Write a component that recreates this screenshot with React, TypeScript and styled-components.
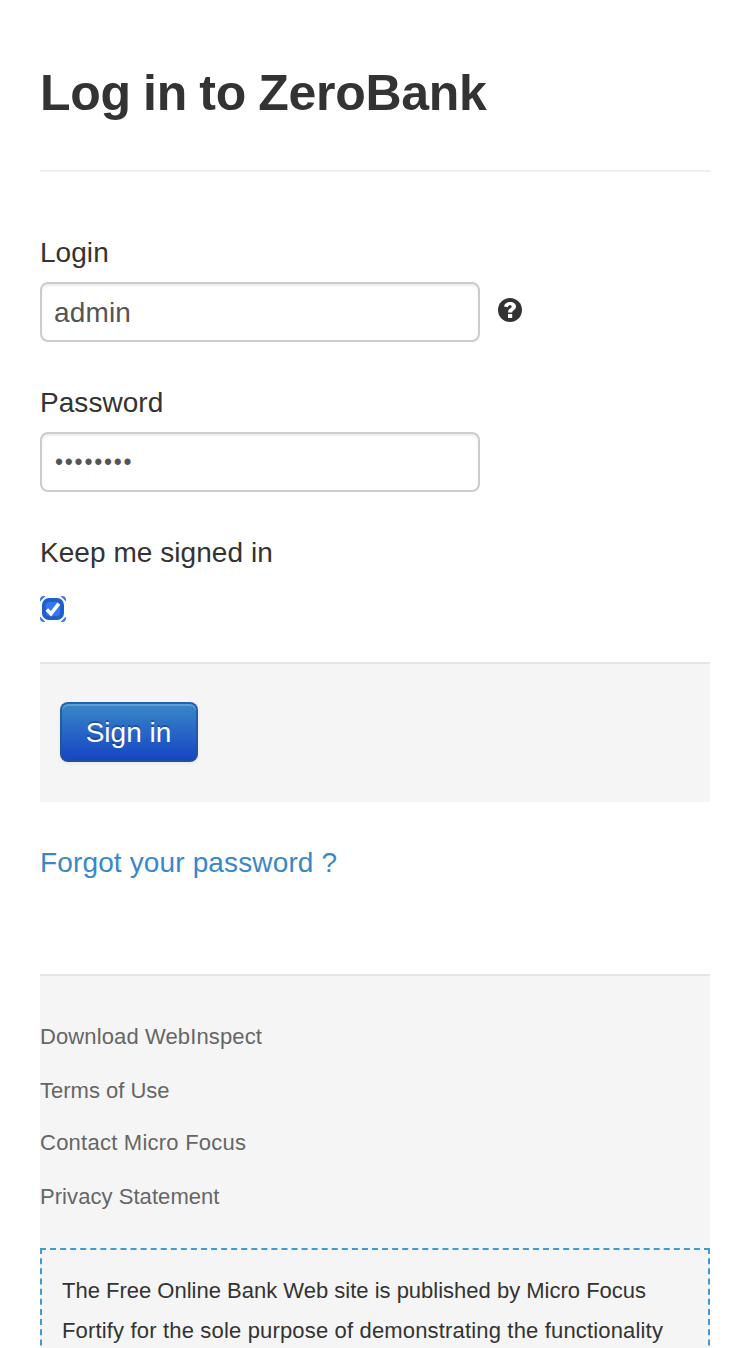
import React from 'react';
import styled, { createGlobalStyle } from 'styled-components';

const GlobalStyle = createGlobalStyle`
  *, *::before, *::after { box-sizing: border-box; }
  html, body { margin: 0; padding: 0; background: #fff; }
  body {
    font-family: "Helvetica Neue", "Liberation Sans", Arial, sans-serif;
    font-size: 28px;
    line-height: 40px;
    color: #333;
  }
`;

const Page = styled.main`
  height: 1348px;
  padding: 53px 40px 0;
  overflow: hidden;
`;

const Title = styled.h3`
  margin: 0;
  padding-bottom: 37px;
  border-bottom: 2px solid #eee;
  font-size: 50px;
  line-height: 80px;
  font-weight: 700;
  letter-spacing: -0.3px;
  word-spacing: -1.2px;
  white-space: nowrap;
`;

const Form = styled.form`
  display: flex;
  flex-direction: column;
  gap: 40px;
  margin: 60px 0 0;
`;

const Field = styled.div`
  display: flex;
  flex-direction: column;
  gap: 10px;
`;

const Label = styled.label`
  display: block;
  align-self: flex-start;
  height: 40px;
  line-height: 42px;
  letter-spacing: 0.05px;
`;

const Controls = styled.div`
  display: flex;
  align-items: center;
  gap: 18px;
`;

const Input = styled.input`
  width: 440px;
  height: 60px;
  margin: 0;
  padding: 10px 12px 8px;
  border: 2px solid #ccc;
  border-radius: 8px;
  background: #fff;
  box-shadow: inset 0 2px 2px rgba(0, 0, 0, 0.075);
  color: #555;
  font: inherit;
  letter-spacing: 0.15px;
  outline: none;
`;

const PasswordInput = styled(Input)`
  padding: 8px 13px 8px;
  font-size: 23px;
  letter-spacing: 1.75px;
`;

const HelpIcon = styled.svg`
  display: block;
  width: 24px;
  height: 24px;
  margin-bottom: 4px;
`;

const CheckIcon = styled.svg`
  display: block;
  width: 26px;
  height: 26px;
  margin-top: 14px;
`;

const Actions = styled.div`
  height: 140px;
  padding: 38px 20px;
  border-top: 2px solid #e5e5e5;
  background: #f5f5f5;
`;

const SubmitButton = styled.button`
  display: block;
  width: 138px;
  height: 60px;
  padding: 2px 1px 0 0;
  border: 2px solid transparent;
  border-radius: 8px;
  background: linear-gradient(#3a87c8, #1545c4) padding-box, linear-gradient(#2462b2, #1f4f98) border-box;
  box-shadow: inset 0 2px 0 rgba(255, 255, 255, 0.2), 0 2px 4px rgba(0, 0, 0, 0.05);
  color: #fff;
  font: inherit;
  text-shadow: 0 -2px 0 rgba(0, 0, 0, 0.25);
`;

const ForgotLink = styled.a`
  display: block;
  width: max-content;
  height: 40px;
  line-height: 42px;
  letter-spacing: 0.14px;
  color: #3a87c8;
  text-decoration: none;
`;

const Footer = styled.footer`
  margin-top: 92px;
  padding-top: 34px;
  border-top: 2px solid #e5e5e5;
  background: #f5f5f5;
  font-size: 22px;
`;

const FooterLinks = styled.ul`
  margin: 0 0 24px;
  padding: 0;
  list-style: none;
`;

const FooterLink = styled.li<{ $spacing?: number; $tight?: boolean }>`
  height: ${({ $tight }) => ($tight ? 52 : 54)}px;
  line-height: 54px;
  letter-spacing: ${({ $spacing = 0 }) => $spacing}px;
  color: #666;
`;

const Disclaimer = styled.div`
  height: 260px;
  padding: 21px 20px 20px;
  border: 2px dashed #4199d5;
  white-space: nowrap;
`;

const TextLine = styled.span<{ $spacing?: number }>`
  display: block;
  letter-spacing: ${({ $spacing = 0 }) => $spacing}px;
`;

export default function App() {
  return (
    <>
      <GlobalStyle />
      <Page>
        <Title>Log in to ZeroBank</Title>
        <Form onSubmit={(e) => e.preventDefault()}>
          <Field>
            <Label htmlFor="login">Login</Label>
            <Controls>
              <Input id="login" type="text" defaultValue="admin" />
              <HelpIcon viewBox="0 0 24 24" aria-label="Help">
                <circle cx="12" cy="12" r="12" fill="#333" />
                <path d="M6 8.6C6.5 5.3 9 3.9 12.2 3.9c3.4 0 5.8 1.8 5.8 4.6 0 3.4-3.8 3.6-3.8 6.1H10c0-4.2 3.7-3.8 3.7-6 0-.8-.7-1.3-1.7-1.3-1.2 0-1.9.7-2.1 1.9z" fill="#fff" />
                <rect x="10" y="16" width="4.2" height="4" fill="#fff" />
              </HelpIcon>
            </Controls>
          </Field>
          <Field>
            <Label htmlFor="password">Password</Label>
            <PasswordInput id="password" type="password" defaultValue="password" />
          </Field>
          <Field>
            <Label>Keep me signed in</Label>
            <CheckIcon viewBox="0 0 26 26" role="checkbox" aria-checked="true">
              <rect width="26" height="26" rx="4" fill="#2f78f6" />
              <path d="M5.5 0H20.5L26 5.5V20.5L20.5 26H5.5L0 20.5V5.5Z" fill="#fff" />
              <rect x="2" y="2" width="22" height="22" rx="7" fill="#1f5fc8" />
              <rect x="6" y="6" width="14" height="14" rx="3" fill="#3078f6" />
              <path d="M6.8 13.4 11 17.8 18.8 7.6" fill="none" stroke="#fff" strokeWidth="3.6" />
            </CheckIcon>
          </Field>
          <Actions>
            <SubmitButton type="submit">Sign in</SubmitButton>
          </Actions>
          <ForgotLink href="#">Forgot your password ?</ForgotLink>
        </Form>
        <Footer>
          <FooterLinks>
            <FooterLink $spacing={0.12}>Download WebInspect</FooterLink>
            <FooterLink $tight>Terms of Use</FooterLink>
            <FooterLink $spacing={0.24}>Contact Micro Focus</FooterLink>
            <FooterLink $spacing={0.06}>Privacy Statement</FooterLink>
          </FooterLinks>
          <Disclaimer>
            <TextLine>The Free Online Bank Web site is published by Micro Focus</TextLine>
            <TextLine $spacing={0.165}>Fortify for the sole purpose of demonstrating the functionality</TextLine>
          </Disclaimer>
        </Footer>
      </Page>
    </>
  );
}
